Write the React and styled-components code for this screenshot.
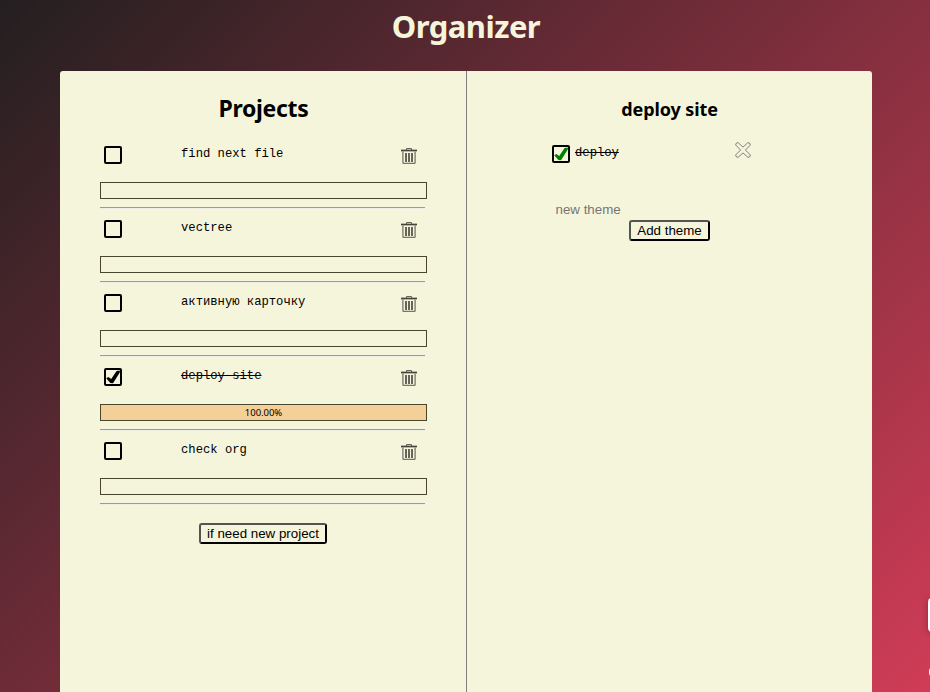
import React from "react";
import styled, { createGlobalStyle } from "styled-components";

const GlobalStyle = createGlobalStyle`
  * { box-sizing: border-box; }
  body { margin: 0; overflow: hidden; font-family: "Noto Sans", sans-serif; color: #000; }
`;

const Page = styled.div`
  position: relative;
  height: 692px;
  overflow: hidden;
  background: linear-gradient(135deg, #231f20 0%, #d03c56 100%);
`;

const Title = styled.h1`
  margin: 0;
  height: 71px;
  padding-top: 5px;
  padding-left: 2px;
  font-size: 31px;
  line-height: 43px;
  letter-spacing: -0.55px;
  text-align: center;
  color: beige;
`;

const Board = styled.main`
  display: grid;
  grid-template-columns: 407px 405px;
  width: 812px;
  height: 640px;
  margin-left: 60px;
  background: beige;
  border-radius: 3px;
`;

const ProjectsPanel = styled.section`
  border-right: 1px solid #808080;
  padding: 20px 39px 0 40px;
  display: flex;
  flex-direction: column;
`;

const DetailPanel = styled.section`
  padding: 20px 0 0;
  display: flex;
  flex-direction: column;
`;

const Heading = styled.h2`
  margin: 0;
  height: 43px;
  line-height: ${(p) => p.$line}px;
  font-size: ${(p) => p.$size}px;
  letter-spacing: ${(p) => p.$tracking}px;
  text-align: center;
`;

const Project = styled.article`
  width: 327px;
  height: 74px;
`;

const ProjectHead = styled.div`
  display: grid;
  grid-template-columns: 81px 220px 16px;
  height: 48px;
`;

const CheckBox = styled.span`
  display: block;
  width: 18px;
  height: 18px;
  margin: 12px 0 0 4px;

  svg { display: block; }
`;

const Name = styled.span`
  padding-top: 10px;
  font: 12.2px/20px "Liberation Mono", monospace;
  white-space: nowrap;
  text-decoration: ${(p) => (p.$done ? "line-through" : "none")};
`;

const IconButton = styled.button`
  display: block;
  width: 16px;
  height: 16px;
  margin: 14px 0 0;
  padding: 0;
  border: 0;
  background: none;

  svg { display: block; }
`;

const Progress = styled.div`
  height: 17px;
  border: 1px solid #48462c;
  background: ${(p) => (p.$full ? "#f4cf98" : "transparent")};
  font-size: 9.5px;
  line-height: 15px;
  letter-spacing: -0.05px;
  text-align: center;
`;

const Divider = styled.hr`
  width: 325px;
  height: 2px;
  margin: 8px 0 0;
  border: 0;
  border-top: 1px solid #9a9a9e;
  border-bottom: 1px solid #eeeee6;
`;

const Button = styled.button`
  width: ${(p) => p.$width}px;
  height: 21px;
  padding: 0;
  border: 2px outset #000;
  border-radius: 3px;
  background: beige;
  color: #000;
  font: 13.33px/17px "Liberation Sans", sans-serif;
  white-space: nowrap;
`;

const ProjectFooter = styled.div`
  padding: 19px 0 0 99px;
  line-height: 0;
`;

const Theme = styled.div`
  display: grid;
  grid-template-columns: 23px 160px 16px;
  height: 66px;
  margin-left: 85px;

  ${CheckBox} { margin: 11px 0 0; }
  ${Name} { padding-top: 9px; }
  ${IconButton} { margin: 8px 0 0; }
`;

const ThemeForm = styled.form`
  display: flex;
  flex-direction: column;
  align-items: center;
`;

const ThemeInput = styled.input`
  width: 236px;
  height: 18px;
  padding: 0;
  margin: 0 0 2px 8px;
  border: 0;
  background: none;
  font: 13.33px/16px "Liberation Sans", sans-serif;
  &::placeholder { color: #757575; }
`;

const EdgeTab = styled.aside`
  position: absolute;
  left: 928px;
  top: ${(p) => p.$top}px;
  width: 34px;
  height: ${(p) => p.$height}px;
  border-radius: 4px;
  background: #fff;
  box-shadow: 0 1px 6px rgba(0, 0, 0, 0.3);
`;

const EdgeDot = styled.aside`
  position: absolute;
  left: 929px;
  top: 664px;
  width: 16px;
  height: 16px;
  border-radius: 50%;
  background: #fff;
`;

function Check({ color }) {
  return (
    <CheckBox>
      <svg width="18" height="18" viewBox="0 0 18 18">
        <rect x="1" y="1" width="16" height="16" rx="1" fill="none" stroke="#000" strokeWidth="2" />
        {color && <path d="M2.2 10.2 L4.4 8.9 L7.2 11 L12.6 3 L15.8 2.4 L15.8 4.6 L9 15.2 L6.4 15Z" fill={color} />}
      </svg>
    </CheckBox>
  );
}

function Trash() {
  return (
    <svg width="16" height="16" viewBox="0 0 16 16" fill="none">
      <path d="M5.5 2V.5h5V2" stroke="#66655b" />
      <path d="M0 2.5h16" stroke="#45443b" strokeWidth="1.7" />
      <path d="M1.9 3.5v11q0 1 1 1h10.2q1 0 1-1v-11" stroke="#77766a" strokeWidth="1.3" />
      <path d="M5 5v9M8 5v9M11 5v9" stroke="#66655a" strokeWidth="2" />
    </svg>
  );
}

function Cross() {
  return (
    <svg width="16" height="16" viewBox="0 0 16 16" fill="none">
      <path
        d="M3 .6 8 5.1 13 .6Q15 .3 15.4 3L10.4 8l5 5Q15 15.7 13 15.4L8 10.9l-5 4.5Q1 15.7.6 13l5-5-5-5Q1 .3 3 .6Z"
        stroke="#77766c"
        strokeWidth=".9"
      />
    </svg>
  );
}

const projects = [
  { name: "find next file" },
  { name: "vectree" },
  { name: "активную карточку" },
  { name: "deploy site", done: true, progress: "100.00%" },
  { name: "check org" },
];

export default function App() {
  return (
    <Page>
      <GlobalStyle />
      <Title>Organizer</Title>
      <Board>
        <ProjectsPanel>
          <Heading $size={23} $line={34} $tracking={-0.3}>Projects</Heading>
          {projects.map((p) => (
            <Project key={p.name}>
              <ProjectHead>
                <Check color={p.done && "#000"} />
                <Name $done={p.done}>{p.name}</Name>
                <IconButton aria-label="Delete project"><Trash /></IconButton>
              </ProjectHead>
              <Progress $full={p.done}>{p.progress}</Progress>
              <Divider />
            </Project>
          ))}
          <ProjectFooter>
            <Button $width={128}>if need new project</Button>
          </ProjectFooter>
        </ProjectsPanel>
        <DetailPanel>
          <Heading $size={18} $line={36} $tracking={-0.1}>deploy site</Heading>
          <Theme>
            <Check color="#008000" />
            <Name $done>deploy</Name>
            <IconButton aria-label="Delete theme"><Cross /></IconButton>
          </Theme>
          <ThemeForm>
            <ThemeInput placeholder="new theme" />
            <Button type="button" $width={81}>Add theme</Button>
          </ThemeForm>
        </DetailPanel>
      </Board>
      <EdgeTab $top={598} $height={34} />
      <EdgeDot />
    </Page>
  );
}
